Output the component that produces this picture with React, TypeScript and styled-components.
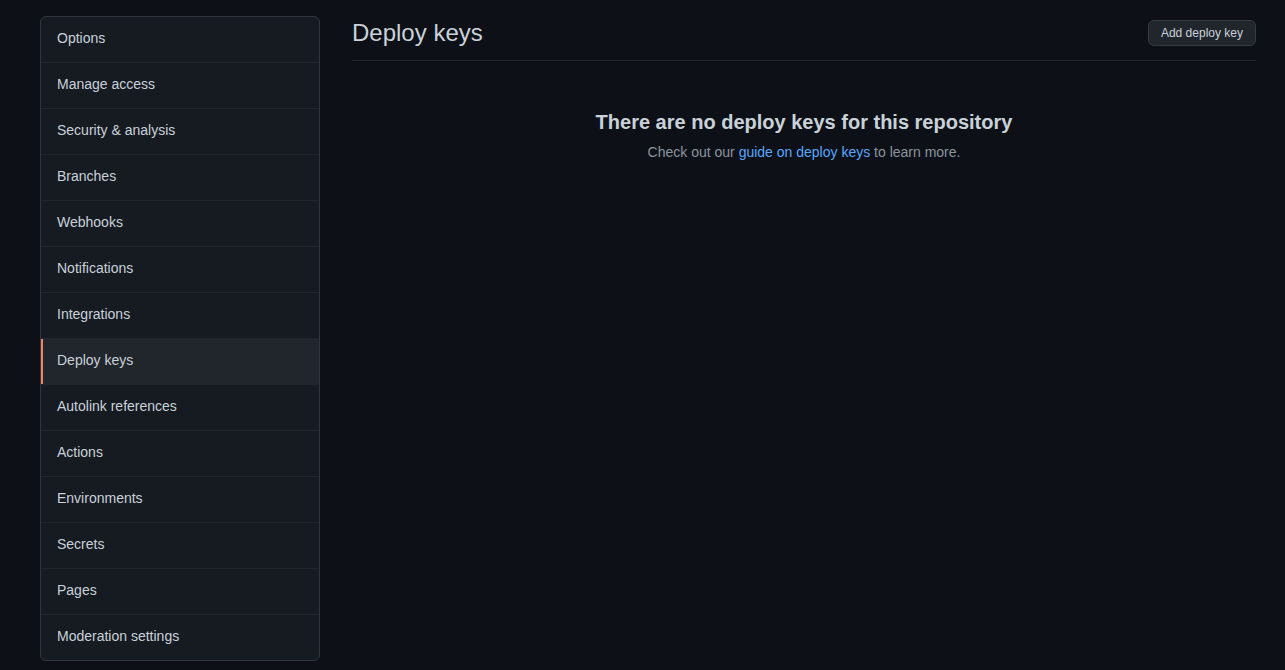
import React from "react";
import styled, { createGlobalStyle } from "styled-components";

const Global = createGlobalStyle`
  html, body { margin: 0; padding: 0; background: #0d1117; }
  body { font-family: "Liberation Sans", Arial, Helvetica, sans-serif; color: #c9d1d9; font-size: 14px; }
  * { box-sizing: border-box; }
`;

const Page = styled.div`
  display: flex;
  gap: 32px;
  padding: 16px 29px 0 40px;
  min-height: 670px;
  background: #0d1117;
`;

const Menu = styled.nav`
  width: 280px;
  flex-shrink: 0;
  align-self: flex-start;
  background: #161b22;
  border: 1px solid #30363d;
  border-radius: 6px;
  overflow: hidden;
  display: flex;
  flex-direction: column;
`;

const MenuItem = styled.a<{ $active?: boolean }>`
  display: block;
  padding: 11px 16px 13px 16px;
  line-height: 21px;
  font-size: 14px;
  color: #c9d1d9;
  text-decoration: none;
  border-top: 1px solid #21262d;
  background: ${(p) => (p.$active ? "#21262d" : "transparent")};
  box-shadow: ${(p) => (p.$active ? "inset 2px 0 0 #f78166" : "none")};
  &:first-child { border-top: none; }
`;

const Main = styled.main`
  flex: 1;
  min-width: 0;
`;

const Subhead = styled.div`
  display: flex;
  align-items: center;
  justify-content: space-between;
  margin-top: -1px;
  padding-bottom: 9px;
  border-bottom: 1px solid #21262d;
`;

const Title = styled.h2`
  margin: 0;
  font-size: 24px;
  font-weight: 400;
  line-height: 36px;
  color: #c9d1d9;
`;

const Button = styled.button`
  font-family: inherit;
  font-size: 12px;
  line-height: 20px;
  padding: 2px 12px;
  color: #c9d1d9;
  background: #21262d;
  border: 1px solid #363b42;
  border-radius: 6px;
  margin-top: 0px;
`;

const Blank = styled.div`
  padding: 46px 32px 32px;
  text-align: center;
`;

const BlankTitle = styled.h3`
  margin: 0 0 5px;
  font-size: 20px;
  line-height: 30px;
  font-weight: 700;
  color: #c9d1d9;
`;

const BlankText = styled.p`
  margin: 0;
  font-size: 14px;
  line-height: 21px;
  color: #8b949e;
`;

const Link = styled.a`
  color: #58a6ff;
  text-decoration: none;
`;

const items = [
  "Options",
  "Manage access",
  "Security & analysis",
  "Branches",
  "Webhooks",
  "Notifications",
  "Integrations",
  "Deploy keys",
  "Autolink references",
  "Actions",
  "Environments",
  "Secrets",
  "Pages",
  "Moderation settings",
];

export default function App() {
  return (
    <>
      <Global />
      <Page>
        <Menu>
          {items.map((i) => (
            <MenuItem key={i} $active={i === "Deploy keys"}>
              {i}
            </MenuItem>
          ))}
        </Menu>
        <Main>
          <Subhead>
            <Title>Deploy keys</Title>
            <Button>Add deploy key</Button>
          </Subhead>
          <Blank>
            <BlankTitle>There are no deploy keys for this repository</BlankTitle>
            <BlankText>
              Check out our <Link>guide on deploy keys</Link> to learn more.
            </BlankText>
          </Blank>
        </Main>
      </Page>
    </>
  );
}
